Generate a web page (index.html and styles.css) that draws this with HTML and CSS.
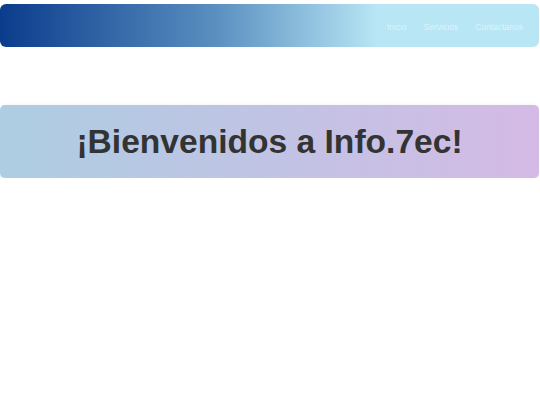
FILE: index.html
```html
<!DOCTYPE html>
<html lang="es">
<head>
<meta charset="utf-8">
<title>Info.7ec</title>
<link rel="stylesheet" href="styles.css">
</head>
<body>
<header class="topbar">
  <nav class="nav">
    <a href="#" class="nav-link">Inicio</a>
    <a href="#" class="nav-link">Servicios</a>
    <a href="#" class="nav-link">Contactanos</a>
  </nav>
</header>
<section class="hero">
  <h1 class="hero-title">¡Bienvenidos a Info.7ec!</h1>
</section>
</body>
</html>
```
FILE: styles.css
```css
html, body {
  margin: 0;
  padding: 0;
  background: #ffffff;
}
body {
  font-family: "Liberation Sans", Arial, sans-serif;
  padding-top: 4px;
  width: 539px;
}
.topbar {
  height: 43px;
  border-radius: 6px;
  background: linear-gradient(to right, #0a3c8c 0%, #5a8fc0 40%, #b8e6f5 70%, #b8e6f5 100%);
  display: flex;
  align-items: center;
  justify-content: flex-end;
  padding-right: 16px;
}
.nav {
  display: flex;
  gap: 17px;
  padding-top: 3px;
}
.nav-link {
  font-size: 8.5px;
  color: rgba(255, 255, 255, 0.55);
  text-decoration: none;
}
.hero {
  margin-top: 58px;
  height: 73px;
  border-radius: 5px;
  background: linear-gradient(to right, #adcde2, #d4bae6);
  box-shadow: 0 2px 6px rgba(0, 0, 0, 0.12);
  display: flex;
  align-items: center;
  justify-content: center;
}
.hero-title {
  margin: 0;
  font-size: 33.6px;
  font-weight: bold;
  color: #333333;
}
```
